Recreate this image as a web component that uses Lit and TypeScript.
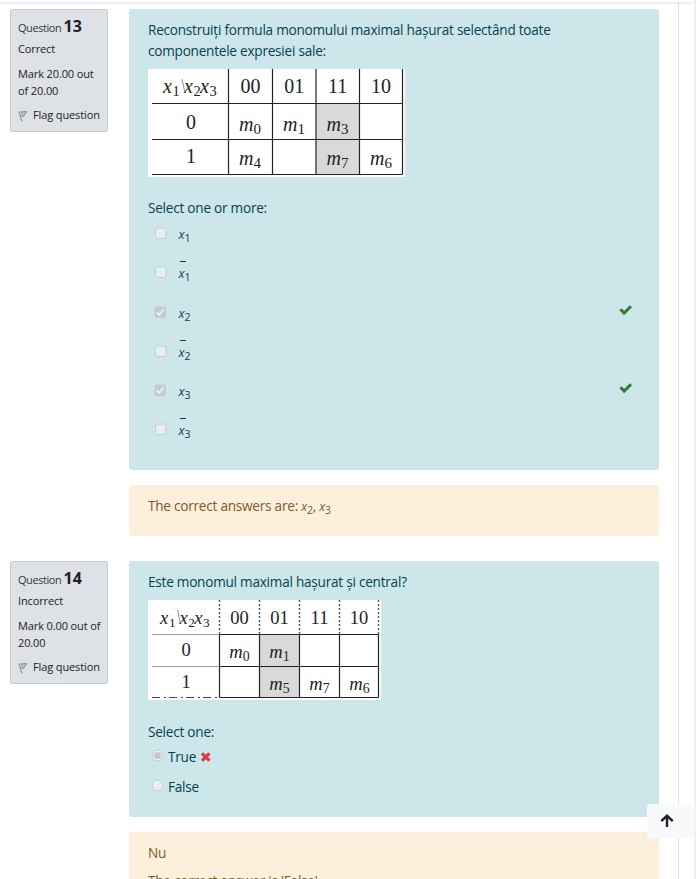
import { LitElement, html, svg, css, nothing } from "lit";
import { customElement, property } from "lit/decorators.js";

interface KMap {
  width: number;
  height: number;
  cols: number[];
  rows: number[];
  shade: [number, number, number, number];
  labelX: number;
  cells: string[][];
  dotted: boolean;
  size: number;
  baselines: number[];
}

const MAP_13: KMap = {
  width: 257, height: 108, cols: [80.5, 124.5, 168, 211.5, 254.5], rows: [34.5, 70.5, 105.5],
  shade: [168, 35, 43, 70], labelX: 43, dotted: false, size: 20, baselines: [24, 60, 94],
  cells: [["m0", "m1", "m3", ""], ["m4", "", "m7", "m6"]],
};

const MAP_14: KMap = {
  width: 233, height: 100, cols: [71.5, 111.5, 151.5, 191.5, 230.5], rows: [34.5, 66.5, 97.5],
  shade: [112, 35, 39, 62], labelX: 38, dotted: true, size: 18.5, baselines: [24, 56, 88],
  cells: [["m0", "m1", "", ""], ["", "m5", "m7", "m6"]],
};

@customElement("karnaugh-map")
class KarnaughMap extends LitElement {
  @property({ attribute: false }) map!: KMap;

  static styles = css`
    :host { display: block; line-height: 0; letter-spacing: 0; }
    svg { display: block; background: #fff; font-family: "Liberation Serif", "Times New Roman", serif; fill: #222; }
    .it { font-style: italic; }
    .line { stroke: #222; stroke-width: 1.2; }
    .dot { stroke: #555; stroke-width: 1.4; stroke-dasharray: 2 2; }
    .soft { stroke: #999; stroke-width: 1; }
    .dash { stroke: #444; stroke-width: 1.2; stroke-dasharray: 8 4 2 3; }
  `;

  render() {
    const m = this.map;
    const s = m.size;
    const last = m.cols[4];
    const [x, y, w, h] = m.shade;
    const k = s / 20;
    return html`<svg width=${m.width} height=${m.height} viewBox="0 0 ${m.width} ${m.height}">
      <rect x=${x} y=${y} width=${w} height=${h} fill="#d9d9d9"></rect>
      ${m.cols.map((c) => svg`
        <line class=${m.dotted ? "dot" : "line"} x1=${c} x2=${c} y1="0" y2=${m.rows[0]}></line>
        <line class="line" x1=${c} x2=${c} y1=${m.rows[0]} y2=${m.rows[2]}></line>`)}
      ${m.rows.map((r, i) => svg`
        <line class=${m.dotted ? (i === 2 ? "dash" : "soft") : "line"} x1="4" x2=${m.cols[0]} y1=${r} y2=${r}></line>
        <line class="line" x1=${m.cols[0]} x2=${last} y1=${r} y2=${r}></line>`)}
      ${[["x", 0], ["x", 21], ["x", 37]].map(([t, dx], i) => svg`
        <text class="it" x=${m.labelX - 28 * k + Number(dx) * k} y=${m.baselines[0]} font-size=${s}>${t}</text>
        <text x=${m.labelX - 18.5 * k + Number(dx) * k} y=${m.baselines[0] + 3} font-size=${s * 0.72}>${i + 1}</text>`)}
      <line x1=${m.labelX - 9 * k} y1=${m.baselines[0] - 14} x2=${m.labelX - 6 * k} y2=${m.baselines[0]} stroke="#777" stroke-width="0.8"></line>
      ${["00", "01", "11", "10"].map((t, i) => svg`
        <text text-anchor="middle" x=${(m.cols[i] + m.cols[i + 1]) / 2} y=${m.baselines[0]} font-size=${s}>${t}</text>`)}
      ${m.cells.map((row, r) => svg`
        <text text-anchor="middle" x=${m.labelX} y=${m.baselines[r + 1]} font-size=${s}>${r}</text>
        ${row.map((t, i) => t ? svg`
          <text class="it" x=${m.cols[i] + 10.5 * k} y=${m.baselines[r + 1] + 2} font-size=${s}>${t[0]}</text>
          <text x=${m.cols[i] + 25 * k} y=${m.baselines[r + 1] + 4.5} font-size=${s * 0.75}>${t[1]}</text>` : nothing)}`)}
    </svg>`;
  }
}

@customElement("question-info")
class QuestionInfo extends LitElement {
  @property() number = "";
  @property() state = "";
  @property({ attribute: false }) mark: string[] = [];

  static styles = css`
    :host { display: block; box-sizing: border-box; width: 98px; height: 123px; padding: 7px 0 0 7px;
      background: #dee2e6; border: 1px solid #c5ccd6; border-radius: 2px; color: #1d2125;
      font-size: 11px; letter-spacing: -0.12px; white-space: nowrap; }
    .no { height: 23px; line-height: 19px; color: #343a40; letter-spacing: -0.45px; }
    .no b { font-size: 16px; letter-spacing: 0; color: #1d2125; }
    .state { line-height: 17px; margin-bottom: 8px; }
    .mark { line-height: 17px; }
    .flag { display: flex; align-items: center; margin-top: 7px; line-height: 17px; }
    svg { width: 10px; height: 12px; margin: 3px 5px 0 0; }
  `;

  render() {
    return html`
      <div class="no">Question <b>${this.number}</b></div>
      <div class="state">${this.state}</div>
      ${this.mark.map((t) => html`<div class="mark">${t}</div>`)}
      <div class="flag">
        <svg viewBox="0 0 10 12" fill="none" stroke="#8f9193"><path d="M.8 2L8.5 1.6 5.6 6.3 2.6 5.6M1 2l3 9.5M3.4 2.5l2 2.5" stroke-width="1.1"/></svg>
        <span>Flag question</span>
      </div>`;
  }
}

const OPTIONS = [
  { sub: "1", bar: false, on: false },
  { sub: "1", bar: true, on: false },
  { sub: "2", bar: false, on: true },
  { sub: "2", bar: true, on: false },
  { sub: "3", bar: false, on: true },
  { sub: "3", bar: true, on: false },
];

@customElement("app-root")
class AppRoot extends LitElement {
  static styles = css`
    :host { display: block; position: relative; width: 696px; height: 879px; overflow: hidden; background: #fff;
      font-family: "Open Sans", "Noto Sans", sans-serif; font-size: 13.6px; letter-spacing: -0.24px; color: #001a1e; }
    .page { display: grid; grid-template-columns: 678px 15px 3px; height: 879px; }
    .main { padding: 9px 0 0 10px; border-right: 1px solid #dee2e6; box-sizing: border-box; width: 679px; }
    .scroll { grid-column: 3; width: 2px; background: #f1f1f1; justify-self: end; }
    .top { position: absolute; left: 0; top: 0; width: 694px; height: 2px; background: #fff; box-shadow: 0 1px 3px rgba(0,0,0,.16); }
    .question { display: grid; grid-template-columns: 98px 530px; column-gap: 21px; align-items: start; margin-bottom: 25px; }
    .box { box-sizing: border-box; border-radius: 3px; padding: 10px 19px 0; white-space: nowrap; }
    .ask { background: #cde6ea; color: #054251; line-height: 21px; }
    .q13 { height: 461px; }
    .q14 { height: 256px; }
    .note { background: #fcefdc; color: #7d5a29; margin-top: 15px; height: 51px; line-height: 21px; }
    .last { height: 90px; }
    .last .second { margin-top: 7px; }
    .q13 karnaugh-map { margin: 8px 0 20px; }
    .q14 karnaugh-map { margin: 8px 0 21px; }
    .option { display: grid; grid-template-columns: 30px 1fr 14px; align-items: center; height: 39px; padding: 0 7px 0 6px; box-sizing: border-box; }
    .option:nth-child(2) { height: 40px; padding-bottom: 1px; }
    .list { margin-top: -4px; }
    .check { width: 13px; height: 13px; display: block; }
    .var { display: inline-block; position: relative; font-size: 12.6px; font-style: italic; line-height: 16px; margin-left: -5.5px; letter-spacing: 0; }
    .var sub, .note sub { font-size: 10.5px; font-style: normal; line-height: 0; vertical-align: -2.5px; }
    .over::before { content: ""; position: absolute; left: 1px; top: -5px; width: 6px; height: 1px; background: #054251; }
    .note i { font-size: 12.4px; }
    .tick { display: block; width: 14px; height: 12px; margin-top: -5px; }
    .radio { display: flex; align-items: center; height: 30px; padding-left: 3px; }
    .radio svg.r { width: 13px; height: 13px; margin: -2px 4px 0 0; }
    .radios { margin-top: -1px; }
    .cross { width: 12px; height: 12px; margin: 1px 0 0 4px; }
    .up { position: absolute; left: 647px; top: 804px; width: 47px; height: 34px; border-radius: 4px; background: #f8f9fa; }
    .up svg { position: absolute; left: 12px; top: 9px; width: 16px; height: 16px; }
  `;

  private option(o: { sub: string; bar: boolean; on: boolean }) {
    return html`<div class="option">
      <svg class="check" viewBox="0 0 13 13">
        ${o.on
          ? svg`<rect x=".5" y=".5" width="11.5" height="11.5" rx="2" fill="#c5cccd"/><path d="M2.8 6.3l2.5 2.5L9.7 3.5" fill="none" stroke="#f1f5f5" stroke-width="1.7"/>`
          : svg`<rect x="1.5" y="1" width="10.5" height="10.5" rx="2" fill="#e7eff0" stroke="#c5cecf"/>`}
      </svg>
      <span><span class="var ${o.bar ? "over" : ""}">x<sub>${o.sub}</sub></span></span>
      ${o.on ? html`<svg class="tick" viewBox="0 0 14 12"><path d="M1.5 5.3L5.1 9 12 2.2" fill="none" stroke="#357a32" stroke-width="3"/></svg>` : nothing}
    </div>`;
  }

  render() {
    return html`
      <div class="page">
        <div class="main">
          <section class="question">
            <question-info number="13" state="Correct" .mark=${["Mark 20.00 out", "of 20.00"]}></question-info>
            <div>
              <div class="box ask q13">
                <div>Reconstruiți formula monomului maximal hașurat selectând toate</div>
                <div>componentele expresiei sale:</div>
                <karnaugh-map .map=${MAP_13}></karnaugh-map>
                <div>Select one or more:</div>
                <div class="list">${OPTIONS.map((o) => this.option(o))}</div>
              </div>
              <div class="box note">The correct answers are: <i>x</i><sub>2</sub>, <i>x</i><sub>3</sub></div>
            </div>
          </section>
          <section class="question">
            <question-info number="14" state="Incorrect" .mark=${["Mark 0.00 out of", "20.00"]}></question-info>
            <div>
              <div class="box ask q14">
                <div>Este monomul maximal hașurat și central?</div>
                <karnaugh-map .map=${MAP_14}></karnaugh-map>
                <div>Select one:</div>
                <div class="radios">
                  <div class="radio">
                    <svg class="r" viewBox="0 0 13 13"><circle cx="6.5" cy="6.5" r="5.3" fill="#e7eff0" stroke="#c5cecf"/><circle cx="6.5" cy="6.5" r="3.5" fill="#c2c9ca"/></svg>
                    <span>True</span>
                    <svg class="cross" viewBox="0 0 12 12"><path d="M2 2.3l7.4 7.4M9.4 2.3L2 9.7" stroke="#d43f3a" stroke-width="3.2"/></svg>
                  </div>
                  <div class="radio">
                    <svg class="r" viewBox="0 0 13 13"><circle cx="6.5" cy="6.5" r="5.3" fill="#e7eff0" stroke="#c5cecf"/></svg>
                    <span>False</span>
                  </div>
                </div>
              </div>
              <div class="box note last">
                <div>Nu</div>
                <div class="second">The correct answer is 'False'.</div>
              </div>
            </div>
          </section>
        </div>
        <div class="scroll"></div>
      </div>
      <div class="top"></div>
      <div class="up"><svg viewBox="0 0 16 16" fill="none" stroke="#1d2125" stroke-width="2.4"><path d="M8 14V3M2.3 8.2L8 2.7l5.7 5.5"/></svg></div>`;
  }
}
